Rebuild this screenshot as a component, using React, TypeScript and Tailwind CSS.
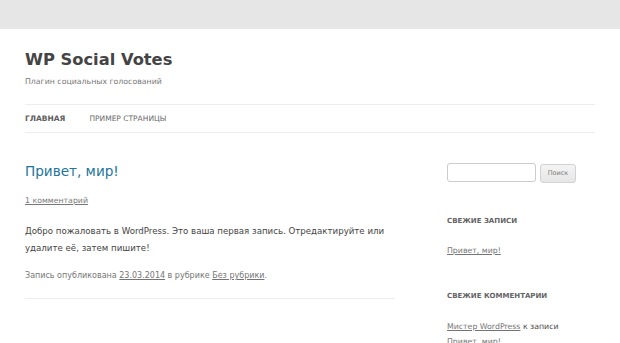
import React from "react";

const font = { fontFamily: '"DejaVu Sans", "Open Sans", sans-serif' };

export default function App() {
  return (
    <div className="w-[620px] h-[343px] overflow-hidden bg-[#e6e6e6]" style={font}>
      <div className="h-[29px]" />
      <div className="bg-white h-[314px] px-[25px]">
        <header className="pt-[19px]">
          <h1 className="text-[16.3px] leading-[24px] font-bold text-[#444]">WP Social Votes</h1>
          <p className="mt-[4px] text-[7.8px] leading-[12px] text-[#757575]">Плагин социальных голосований</p>
        </header>
        <nav className="mt-[16px] w-[570px] border-t border-b border-[#ededed] h-[29px] flex items-center gap-[24px]">
          <span className="text-[7.5px] font-bold text-[#5e5e5e] uppercase">Главная</span>
          <span className="text-[7.5px] text-[#6a6a6a] uppercase">Пример страницы</span>
        </nav>
        <div className="flex">
          <main className="w-[370px] shrink-0">
            <h2 className="mt-[28px] text-[13.6px] leading-[20px] text-[#21759b]">Привет, мир!</h2>
            <p className="mt-[14px] text-[7.8px] leading-[12px] text-[#777] underline">1 комментарий</p>
            <div className="mt-[16px] text-[8.65px] leading-[17px] text-[#444]">
              Добро пожаловать в WordPress. Это ваша первая запись. Отредактируйте или удалите её, затем пишите!
            </div>
            <p className="mt-[13px] text-[8px] leading-[12px] text-[#757575]">
              Запись опубликована <span className="underline">23.03.2014</span> в рубрике <span className="underline">Без рубрики</span>.
            </p>
            <div className="mt-[16px] border-t border-[#ededed]" />
          </main>
          <aside className="ml-[52px] w-[130px] shrink-0">
            <div className="mt-[30px] flex items-start gap-[4px]">
              <div className="shrink-0 w-[89px] h-[19px] border border-[#ccc] rounded-[3px] bg-white" />
              <div className="shrink-0 mt-[1px] w-[36px] h-[19px] border border-[#d2d2d2] rounded-[3px] bg-gradient-to-b from-[#f4f4f4] to-[#e6e6e6] text-[6.5px] text-[#7c7c7c] flex items-center justify-center">Поиск</div>
            </div>
            <h3 className="mt-[32px] text-[7px] font-bold text-[#636363] uppercase leading-[12px]">Свежие записи</h3>
            <p className="mt-[18px] text-[7.8px] leading-[12px] text-[#757575] underline">Привет, мир!</p>
            <h3 className="mt-[33px] text-[7px] font-bold text-[#636363] uppercase leading-[12px]">Свежие комментарии</h3>
            <p className="mt-[17px] text-[7.8px] leading-[15px] text-[#444]">
              <span className="underline text-[#757575]">Мистер WordPress</span> к записи <span className="text-[#757575]">Привет, мир!</span>
            </p>
          </aside>
        </div>
      </div>
    </div>
  );
}
